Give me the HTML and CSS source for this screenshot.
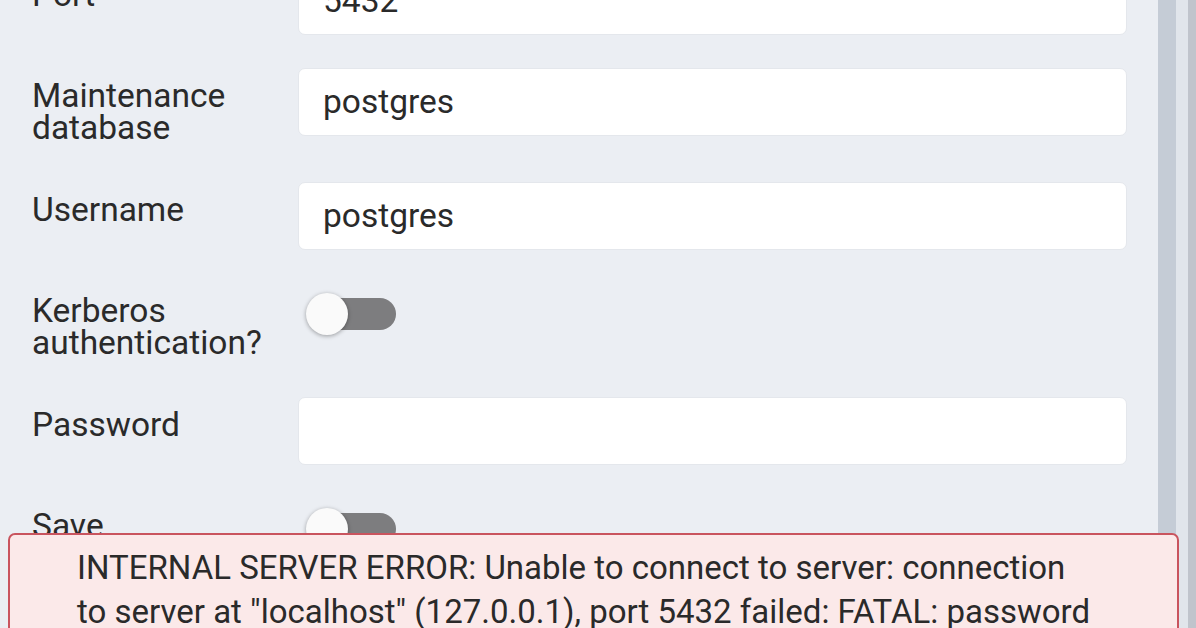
FILE: index.html
```html
<!DOCTYPE html>
<html lang="en">
<head>
<meta charset="utf-8">
<title>Register - Server</title>
<link rel="stylesheet" href="styles.css">
</head>
<body>
<div class="app">
  <div class="panel">
    <div class="form">
      <div class="row">
        <div class="label">Port</div>
        <div class="control"><div class="input">5432</div></div>
      </div>
      <div class="row">
        <div class="label">Maintenance<br>database</div>
        <div class="control"><div class="input">postgres</div></div>
      </div>
      <div class="row">
        <div class="label">Username</div>
        <div class="control"><div class="input">postgres</div></div>
      </div>
      <div class="row">
        <div class="label">Kerberos<br>authentication?</div>
        <div class="control toggle-cell"><span class="switch"><span class="track"></span><span class="knob"></span></span></div>
      </div>
      <div class="row">
        <div class="label">Password</div>
        <div class="control"><div class="input"></div></div>
      </div>
      <div class="row">
        <div class="label">Save</div>
        <div class="control toggle-cell"><span class="switch"><span class="track"></span><span class="knob"></span></span></div>
      </div>
    </div>
  </div>
  <div class="scrollbar">
    <div class="sb-track"></div>
    <div class="sb-gap"></div>
    <div class="sb-edge"></div>
  </div>
</div>
<div class="error-toast">
  <span class="line">INTERNAL SERVER ERROR: Unable to connect to server: connection</span>
  <span class="line">to server at "localhost" (127.0.0.1), port 5432 failed: FATAL: password</span>
  <span class="line">authentication failed for user "postgres"</span>
</div>
</body>
</html>
```
FILE: styles.css
```css
html, body {
  margin: 0;
  padding: 0;
}
body {
  width: 1196px;
  height: 628px;
  overflow: hidden;
  background: #ebeef3;
  font-family: Roboto, "Liberation Sans", sans-serif;
  color: #2b2b2b;
  position: relative;
}
.app {
  display: flex;
  height: 628px;
}
.panel {
  flex: 1;
  padding: 0 31px 0 32px;
  overflow: hidden;
}
.form {
  margin-top: -33px;
}
.row {
  display: flex;
  align-items: flex-start;
  margin-bottom: 33px;
}
.label {
  width: 266px;
  flex: none;
  font-size: 33.5px;
  line-height: 32px;
  padding: 12px 0 5px;
  color: #2a2a2a;
}
.control {
  flex: 1;
}
.input {
  height: 66px;
  background: #ffffff;
  border: 1px solid #e4e7ec;
  border-radius: 7px;
  padding: 0 24px;
  font-size: 33.5px;
  line-height: 66px;
  color: #2a2a2a;
}
.toggle-cell {
  height: 62px;
  display: flex;
  align-items: center;
}
.switch {
  position: relative;
  display: inline-block;
  width: 92px;
  height: 44px;
  margin-left: 8px;
}
.track {
  position: absolute;
  left: 10px;
  right: 2px;
  top: 6px;
  height: 32px;
  border-radius: 16px;
  background: #7d7d7f;
}
.knob {
  position: absolute;
  left: 0;
  top: 1px;
  width: 42px;
  height: 42px;
  border-radius: 50%;
  background: #fafafa;
  box-shadow: 0 1px 4px rgba(0, 0, 0, 0.35);
}
.scrollbar {
  width: 38px;
  flex: none;
  display: flex;
}
.sb-track {
  width: 18px;
  background: #c5ccd6;
}
.sb-gap {
  width: 12px;
  background: #e1e5eb;
}
.sb-edge {
  width: 8px;
  background: #c0c4cc;
}
.error-toast {
  position: absolute;
  left: 8px;
  top: 533px;
  width: 1100px;
  height: 200px;
  padding: 11px 0 0 67px;
  background: #fbe9e9;
  border: 2px solid #c9545e;
  border-radius: 7px;
  font-size: 33px;
  line-height: 44px;
  color: #2a2a2a;
}
.line {
  display: block;
  white-space: nowrap;
}
```
